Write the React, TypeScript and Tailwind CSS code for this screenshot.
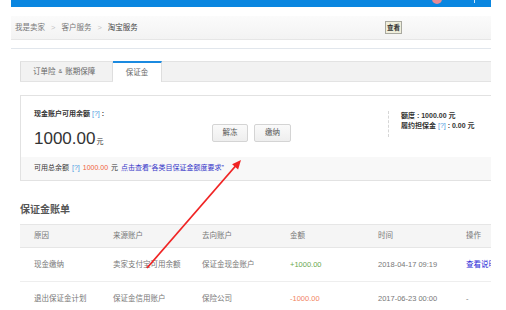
import React from "react";

export default function App() {
  const cell = "flex items-center";
  const cols = "grid grid-cols-[79px_89px_88px_88px_88px_60px] pl-[14px]";
  return (
    <div className="relative w-[506px] h-[310px] overflow-hidden bg-white font-['Liberation_Sans','Noto_Sans_CJK_SC',sans-serif] text-[7.5px] text-[#666]">
      <div className="ml-[11px] w-[480px] h-[310px] overflow-hidden">
        {/* top blue bar */}
        <div className="relative h-[7px] bg-[#0a86e0]">
          <div className="absolute left-[421px] top-[-6px] w-[10px] h-[10px] rounded-full bg-[#e88a94]" />
          <div className="absolute left-[463px] top-[0px] w-[1px] h-[3px] bg-white/80" />
        </div>
        {/* breadcrumb */}
        <div className="mt-[9px] h-[24px] flex items-center bg-gradient-to-b from-[#fbfbfb] to-[#f3f3f3] border-b border-[#e6e6e6]">
          <span className="ml-[4px] text-[#777]">我是卖家</span>
          <span className="mx-[6px] text-[#c4c4c4]">&gt;</span>
          <span className="text-[#777]">客户服务</span>
          <span className="mx-[6px] text-[#c4c4c4]">&gt;</span>
          <span className="text-[#444]">淘宝服务</span>
          <span className="ml-auto mr-[89px] h-[13px] w-[17px] flex items-center justify-center border border-[#a9a9a0] bg-[#efeedc] text-[6.5px] text-[#333] font-bold">查看</span>
        </div>
        <div className="mt-[8px] border-t border-[#e1e6ec]" />

        <div className="ml-[9px] w-[500px]">
          {/* tabs */}
          <div className="mt-[12px] h-[21px] flex bg-[#f2f2f2] border-t border-b border-[#e3e3e3]">
            <div className="w-[93px] flex items-center pl-[12px] border-l border-r border-[#dedede] text-[#666]">
              订单险 <span className="mx-[3px] text-[5.5px]">&amp;</span> 账期保障
            </div>
            <div className="w-[49px] -mt-[1px] -mb-[1px] flex items-center justify-center bg-white border-t-2 border-[#1b8ae0] border-r border-r-[#dedede] text-[#666]">
              保证金
            </div>
          </div>

          {/* card */}
          <div className="mt-[13px] border border-[#e2e2e2]">
            <div className="h-[61px] flex items-start pt-[13px] pl-[13px]">
              <div className="w-[178px]">
                <div className="h-[10px] leading-[10px] font-bold text-[#333] text-[7px]">
                  现金账户可用余额 <span className="text-[#4a9be0] font-normal">[?]</span> :
                </div>
                <div className="mt-[10px] h-[20px] leading-[20px] text-[#333] flex items-end">
                  <span className="text-[17px]">1000.00</span>
                  <span className="ml-[1px] text-[7px] leading-[14px]">元</span>
                </div>
              </div>
              <div className="mt-[15px] flex gap-[6px]">
                <div className="w-[36px] h-[18px] flex items-center justify-center border border-[#d4d4d4] rounded-[2px] bg-gradient-to-b from-[#fafafa] to-[#eeeeee] text-[#555]">解冻</div>
                <div className="w-[37px] h-[18px] flex items-center justify-center border border-[#d4d4d4] rounded-[2px] bg-gradient-to-b from-[#fafafa] to-[#eeeeee] text-[#555]">缴纳</div>
              </div>
              <div className="ml-[97px] mt-[2px] h-[26px] border-l border-dashed border-[#d6d6d6]" />
              <div className="ml-[12px] mt-[2px] text-[7px] text-[#333] font-bold">
                <div className="h-[10px] leading-[10px]">额度 : 1000.00 元</div>
                <div className="h-[10px] leading-[10px]">
                  履约担保金 <span className="text-[#4a9be0] font-normal">[?]</span> : 0.00 元
                </div>
              </div>
            </div>
            <div className="h-[23px] flex items-center pl-[13px] bg-[#f8f8f8] text-[7px]">
              <span className="text-[#333]">可用总余额</span>
              <span className="ml-[3px] text-[#4a9be0]">[?]</span>
              <span className="ml-[3px] text-[#f0623c]">1000.00</span>
              <span className="ml-[3px] text-[#333]">元</span>
              <span className="ml-[3px] text-[#3535c8]">点击查看“各类目保证金额度要求”</span>
            </div>
          </div>

          {/* heading */}
          <div className="mt-[21px] h-[14px] leading-[14px] text-[10px] font-bold text-[#555] font-['Noto_Sans_CJK_SC',serif]">
            保证金账单
          </div>

          {/* table */}
          <div className="mt-[8px] w-[472px]">
            <div className={`h-[24px] ${cols} bg-[#f5f5f5] border-t border-b border-[#e6e6e6] text-[#777]`}>
              <div className={cell}>原因</div>
              <div className={cell}>来源账户</div>
              <div className={cell}>去向账户</div>
              <div className={cell}>金额</div>
              <div className={cell}>时间</div>
              <div className={cell}>操作</div>
            </div>
            <div className={`h-[34px] ${cols} border-b border-[#eeeeee] text-[#777] whitespace-nowrap`}>
              <div className={cell}>现金缴纳</div>
              <div className={cell}>卖家支付宝可用余额</div>
              <div className={cell}>保证金现金账户</div>
              <div className={`${cell} text-[#6aa84f]`}>+1000.00</div>
              <div className={cell}>2018-04-17 09:19</div>
              <div className={`${cell} text-[#2a2ad8]`}>查看说明</div>
            </div>
            <div className={`h-[34px] ${cols} text-[#777] whitespace-nowrap`}>
              <div className={cell}>退出保证金计划</div>
              <div className={cell}>保证金信用账户</div>
              <div className={cell}>保险公司</div>
              <div className={`${cell} text-[#f2845f]`}>-1000.00</div>
              <div className={cell}>2017-06-23 00:00</div>
              <div className={cell}>-</div>
            </div>
          </div>
        </div>
      </div>

      {/* red annotation arrow */}
      <svg className="absolute inset-0 pointer-events-none" width="506" height="310" viewBox="0 0 506 310">
        <line x1="147" y1="268" x2="236" y2="165.5" stroke="#f02424" strokeWidth="1.8" />
        <polygon points="241,160 238.1,169.4 232.1,164.2" fill="#f02424" />
      </svg>
    </div>
  );
}
